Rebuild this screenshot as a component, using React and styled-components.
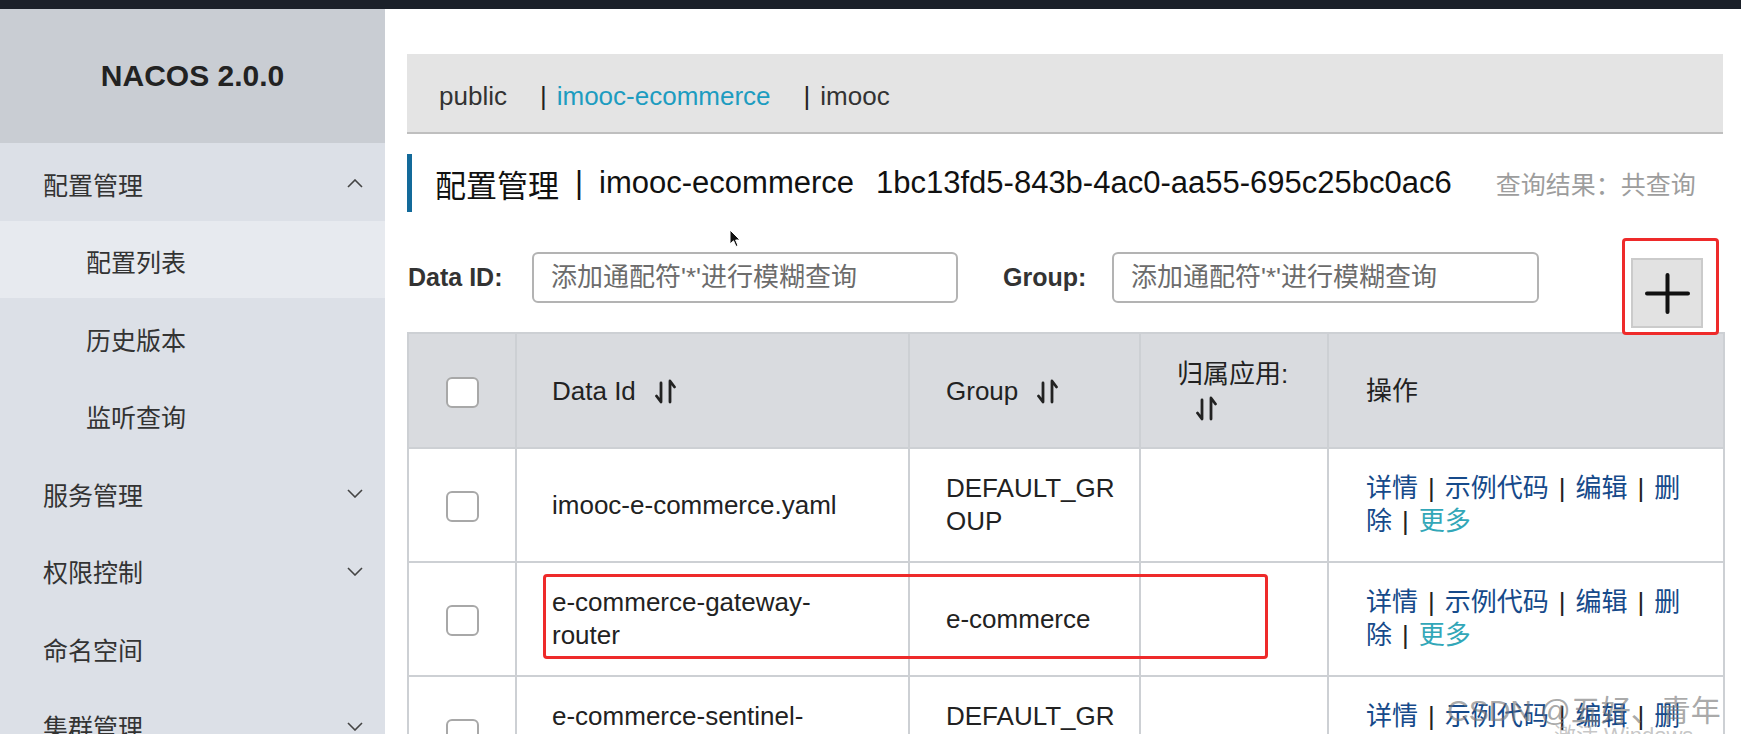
import React from "react";
import styled, { createGlobalStyle } from "styled-components";

const FONT = `"Liberation Sans", "Noto Sans CJK SC", sans-serif`;

const GlobalStyle = createGlobalStyle`
  html, body {
    margin: 0;
    padding: 0;
    height: 100%;
    overflow: hidden;
    background: #fff;
  }
  body {
    font-family: ${FONT};
    color: #222;
  }
  * {
    box-sizing: border-box;
  }
`;

const Page = styled.div`
  position: relative;
  height: 100vh;
  display: flex;
  flex-direction: column;
  overflow: hidden;
`;

const TopStrip = styled.div`
  height: 9px;
  flex-shrink: 0;
  background: #1b2029;
`;

const Body = styled.div`
  flex: 1;
  display: flex;
  min-height: 0;
`;

const Sidebar = styled.aside`
  width: 385px;
  flex-shrink: 0;
  display: flex;
  flex-direction: column;
  background: #dce0e7;
`;

const Logo = styled.div`
  height: 134px;
  flex-shrink: 0;
  display: flex;
  align-items: center;
  justify-content: center;
  background: #c9cdd3;
  font-size: 30px;
  font-weight: 700;
  color: #222;
`;

const MenuItem = styled.div`
  height: 77.5px;
  flex-shrink: 0;
  display: flex;
  align-items: center;
  justify-content: space-between;
  padding-left: ${(p) => (p.$sub ? 86 : 43)}px;
  padding-right: 22px;
  padding-top: 4px;
  font-size: 25px;
  color: #333;
  background: ${(p) => (p.$selected ? "#e7eaef" : "transparent")};
`;

const Main = styled.main`
  flex: 1;
  min-width: 0;
  padding: 45px 18px 0 22px;
  background: #fff;
`;

const NsBar = styled.div`
  height: 80px;
  display: flex;
  align-items: center;
  padding: 6px 0 0 32px;
  background: #e4e4e4;
  border-bottom: 2px solid #bfbfbf;
  font-size: 26px;
  color: #333;
`;

const NsItem = styled.span`
  margin-right: 33px;
  color: ${(p) => (p.$active ? "#1d9cc0" : "#333")};
`;

const NsSep = styled.span`
  margin-right: 10px;
  color: #222;
`;

const TitleRow = styled.div`
  margin-top: 20px;
  height: 58px;
  display: flex;
  align-items: center;
  padding-left: 23px;
  border-left: 5px solid #136a9a;
  white-space: nowrap;
  overflow: hidden;
  font-size: 31px;
  color: #111;
`;

const TitleSep = styled.span`
  margin: 0 16px;
`;

const TitleId = styled.span`
  margin-left: 22px;
`;

const ResultHint = styled.span`
  margin-left: 44px;
  font-size: 25px;
  color: #9d9d9d;
`;

const SearchRow = styled.div`
  margin-top: 40px;
  height: 76px;
  display: flex;
  align-items: flex-start;
`;

const Field = styled.div`
  height: 51px;
  display: flex;
  align-items: center;
  margin-left: ${(p) => p.$ml || 0}px;
`;

const Label = styled.label`
  width: ${(p) => p.$w}px;
  padding-left: ${(p) => p.$pl || 0}px;
  font-size: 25px;
  font-weight: 700;
  color: #333;
`;

const Input = styled.input`
  width: ${(p) => p.$w}px;
  height: 51px;
  padding: 0 0 0 17px;
  border: 2px solid #b3b3b3;
  border-radius: 6px;
  background: #fff;
  font: 26px ${FONT};
  outline: none;

  &::placeholder {
    color: #6c6c6c;
  }
`;

const AddButton = styled.button`
  width: 72px;
  height: 70px;
  margin: 6px 20px 0 auto;
  padding: 0;
  display: flex;
  align-items: center;
  justify-content: center;
  background: #e2e2e2;
  border: 2px solid #cbcbcb;
`;

const Table = styled.table`
  width: 1316px;
  margin-top: 4px;
  border-collapse: collapse;
  table-layout: fixed;
  font-size: 26px;
  color: #222;
`;

const Th = styled.th`
  height: 115px;
  padding: 0 ${(p) => p.$pr ?? 20}px 0 ${(p) => p.$pl ?? 36}px;
  background: #d9dbdf;
  border: 2px solid #cdd0d4;
  text-align: ${(p) => (p.$center ? "center" : "left")};
  vertical-align: middle;
  font-weight: 400;
  line-height: 34px;
`;

const Td = styled.td`
  height: 114px;
  padding: 0 ${(p) => p.$pr ?? 20}px 0 ${(p) => p.$pl ?? 36}px;
  border: 2px solid #cdd0d4;
  text-align: ${(p) => (p.$center ? "center" : "left")};
  vertical-align: middle;
  line-height: 33px;
  word-break: ${(p) => (p.$breakAll ? "break-all" : "normal")};
`;

const Checkbox = styled.span`
  display: inline-block;
  width: 33px;
  height: 31px;
  vertical-align: middle;
  background: #fff;
  border: 2px solid #a8a8a8;
  border-radius: 6px;
`;

const SortIcon = styled.svg`
  display: inline-block;
  margin-left: 19px;
  vertical-align: -4px;
`;

const OpLink = styled.span`
  color: ${(p) => (p.$more ? "#32a7b8" : "#164a8a")};
`;

const OpSep = styled.span`
  margin: 0 10px;
  color: #222;
`;

const Annotation = styled.div`
  position: absolute;
  left: ${(p) => p.$x}px;
  top: ${(p) => p.$y}px;
  width: ${(p) => p.$w}px;
  height: ${(p) => p.$h}px;
  border: 3px solid #ee2a2a;
  border-radius: 4px;
  pointer-events: none;
`;

const Pointer = styled.svg`
  position: absolute;
  left: 729px;
  top: 229px;
`;

const Watermark = styled.div`
  position: absolute;
  left: 1447px;
  top: 686px;
  white-space: nowrap;
  font-size: 30px;
  color: rgba(120, 120, 120, 0.65);
`;

const WinNote = styled.div`
  position: absolute;
  left: 1554px;
  top: 717px;
  white-space: nowrap;
  font-size: 22px;
  color: rgba(150, 150, 150, 0.55);
`;

const Chevron = ({ up }) => (
  <svg width="16" height="9" viewBox="0 0 16 9">
    <polyline
      points={up ? "1,8 8,1 15,8" : "1,1 8,8 15,1"}
      fill="none"
      stroke="#444"
      strokeWidth="1.6"
    />
  </svg>
);

const Sort = () => (
  <SortIcon width="22" height="25" viewBox="0 0 22 25">
    <path
      d="M6 4 V23 L1.5 17 M15 23 V2 L19.5 8"
      fill="none"
      stroke="#222"
      strokeWidth="2.8"
      strokeLinecap="round"
      strokeLinejoin="round"
    />
  </SortIcon>
);

const Ops = () => (
  <>
    <OpLink>详情</OpLink>
    <OpSep>|</OpSep>
    <OpLink>示例代码</OpLink>
    <OpSep>|</OpSep>
    <OpLink>编辑</OpLink>
    <OpSep>|</OpSep>
    <OpLink>删</OpLink>
    <OpLink>除</OpLink>
    <OpSep>|</OpSep>
    <OpLink $more>更多</OpLink>
  </>
);

const menu = [
  { label: "配置管理", chevron: "up" },
  { label: "配置列表", sub: true, selected: true },
  { label: "历史版本", sub: true },
  { label: "监听查询", sub: true },
  { label: "服务管理", chevron: "down" },
  { label: "权限控制", chevron: "down" },
  { label: "命名空间" },
  { label: "集群管理", chevron: "down" },
];

const rows = [
  { id: "imooc-e-commerce.yaml", group: "DEFAULT_GROUP" },
  { id: "e-commerce-gateway-router", group: "e-commerce" },
  { id: "e-commerce-sentinel-datasource", group: "DEFAULT_GROUP" },
];

const App = () => (
  <Page>
    <GlobalStyle />
    <TopStrip />
    <Body>
      <Sidebar>
        <Logo>NACOS 2.0.0</Logo>
        {menu.map((m) => (
          <MenuItem key={m.label} $sub={m.sub} $selected={m.selected}>
            <span>{m.label}</span>
            {m.chevron && <Chevron up={m.chevron === "up"} />}
          </MenuItem>
        ))}
      </Sidebar>

      <Main>
        <NsBar>
          <NsItem>public</NsItem>
          <NsSep>|</NsSep>
          <NsItem $active>imooc-ecommerce</NsItem>
          <NsSep>|</NsSep>
          <NsItem>imooc</NsItem>
        </NsBar>

        <TitleRow>
          <span>配置管理</span>
          <TitleSep>|</TitleSep>
          <span>imooc-ecommerce</span>
          <TitleId>1bc13fd5-843b-4ac0-aa55-695c25bc0ac6</TitleId>
          <ResultHint>查询结果：共查询</ResultHint>
        </TitleRow>

        <SearchRow>
          <Field>
            <Label $w={125} $pl={1}>Data ID:</Label>
            <Input $w={426} placeholder="添加通配符'*'进行模糊查询" />
          </Field>
          <Field $ml={45}>
            <Label $w={109}>Group:</Label>
            <Input $w={427} placeholder="添加通配符'*'进行模糊查询" />
          </Field>
          <AddButton>
            <svg width="45" height="41" viewBox="0 0 45 41">
              <path
                d="M2 20.5 H43 M22.5 2 V39"
                stroke="#111"
                strokeWidth="4"
                strokeLinecap="round"
              />
            </svg>
          </AddButton>
        </SearchRow>

        <Table>
          <colgroup>
            <col style={{ width: 108 }} />
            <col style={{ width: 393 }} />
            <col style={{ width: 231 }} />
            <col style={{ width: 188 }} />
            <col style={{ width: 396 }} />
          </colgroup>
          <thead>
            <tr>
              <Th $center $pl={0} $pr={0}>
                <Checkbox />
              </Th>
              <Th $pl={35}>
                Data Id
                <Sort />
              </Th>
              <Th>
                Group
                <Sort />
              </Th>
              <Th $pr={15}>
                归属应用:
                <Sort />
              </Th>
              <Th $pl={37}>操作</Th>
            </tr>
          </thead>
          <tbody>
            {rows.map((r) => (
              <tr key={r.id}>
                <Td $center $pl={0} $pr={0}>
                  <Checkbox />
                </Td>
                <Td $pl={35} $pr={38}>
                  {r.id}
                </Td>
                <Td $pr={15} $breakAll>
                  {r.group}
                </Td>
                <Td />
                <Td $pl={37} $pr={30}>
                  <Ops />
                </Td>
              </tr>
            ))}
          </tbody>
        </Table>
      </Main>
    </Body>

    <Annotation $x={1622} $y={238} $w={97} $h={97} />
    <Annotation $x={543} $y={574} $w={725} $h={85} />

    <Pointer width="12" height="19" viewBox="0 0 12 19">
      <path
        d="M1 1 L1 15 L4.5 11.8 L7 17.5 L9 16.6 L6.6 11 L11 11 Z"
        fill="#111"
        stroke="#fff"
        strokeWidth="1"
      />
    </Pointer>

    <Watermark>CSDN @五好、青年</Watermark>
    <WinNote>激活 Windows</WinNote>
  </Page>
);

export default App;
